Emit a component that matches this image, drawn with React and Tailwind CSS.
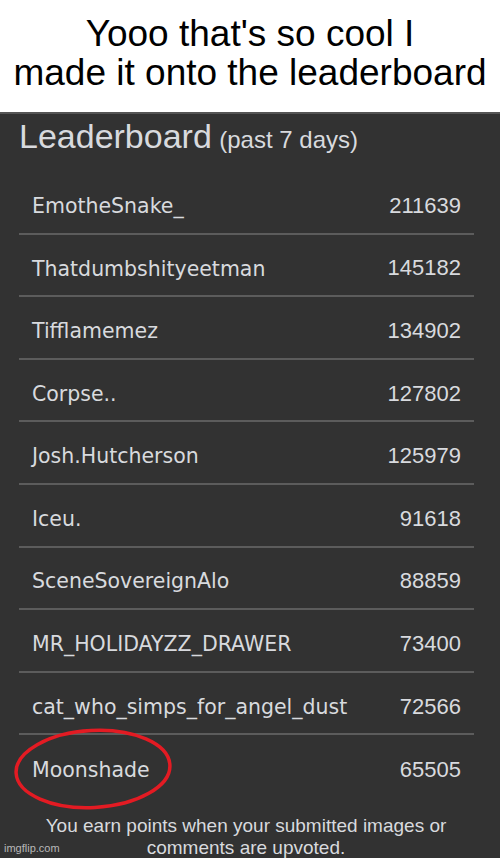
import React from "react";

const rows = [
  { name: "EmotheSnake_", points: 211639 },
  { name: "Thatdumbshityeetman", points: 145182 },
  { name: "Tifflamemez", points: 134902 },
  { name: "Corpse..", points: 127802 },
  { name: "Josh.Hutcherson", points: 125979 },
  { name: "Iceu.", points: 91618 },
  { name: "SceneSovereignAlo", points: 88859 },
  { name: "MR_HOLIDAYZZ_DRAWER", points: 73400 },
  { name: "cat_who_simps_for_angel_dust", points: 72566 },
  { name: "Moonshade", points: 65505 },
];

const arial = { fontFamily: '"Liberation Sans", Arial, sans-serif' };
const verdana = { fontFamily: '"DejaVu Sans", Verdana, sans-serif' };

const App = () => {
  return (
    <div className="relative w-[500px] h-[858px] overflow-hidden bg-[#323232]" style={arial}>
      {/* caption */}
      <div className="h-[112px] bg-white flex flex-col items-center justify-center text-black text-[37px] leading-[39px] pb-[6px]">
        <span>Yooo that's so cool I</span>
        <span>made it onto the leaderboard</span>
      </div>

      <div className="border-t-2 border-[#555555]">
        <div className="pt-[5px] pl-[19px] text-[#d8dade] leading-[34px]">
          <span className="text-[34px]">Leaderboard</span>{" "}
          <span className="text-[24px] ml-[3px]">(past 7 days)</span>
        </div>

        <div className="ml-[19px] mr-[26px] mt-[12px]">
          {rows.map((r, i) => {
            const last = i === rows.length - 1;
            return (
              <div
                key={r.name}
                className={
                  last
                    ? "relative flex items-center justify-between h-[80px] pb-[12px] px-[13px]"
                    : "flex items-center justify-between h-[62.6px] pt-[6px] px-[13px] border-b-2 border-[#5c5c5c]"
                }
              >
                <span className="text-[20.5px] text-[#d8dade] mt-[2px]" style={verdana}>
                  {r.name}
                </span>
                <span className="text-[22px] text-[#d8dade]">{r.points}</span>
                {last && (
                  <svg
                    className="absolute left-[-7px] top-[-8px]"
                    width="162"
                    height="84"
                    viewBox="0 0 162 84"
                  >
                    <ellipse
                      cx="81"
                      cy="42"
                      rx="77"
                      ry="38.5"
                      fill="none"
                      stroke="#e31b23"
                      strokeWidth="3.5"
                      transform="rotate(-3 81 42)"
                    />
                  </svg>
                )}
              </div>
            );
          })}
        </div>

        <div className="text-center text-[19px] leading-[22px] text-[#d8dade] pr-[8px]">
          <p>You earn points when your submitted images or</p>
          <p>comments are upvoted.</p>
        </div>
      </div>

      <span className="absolute left-[4px] bottom-[4px] text-[11px] leading-none text-[#b8b8b8]">imgflip.com</span>
    </div>
  );
};

export default App;
